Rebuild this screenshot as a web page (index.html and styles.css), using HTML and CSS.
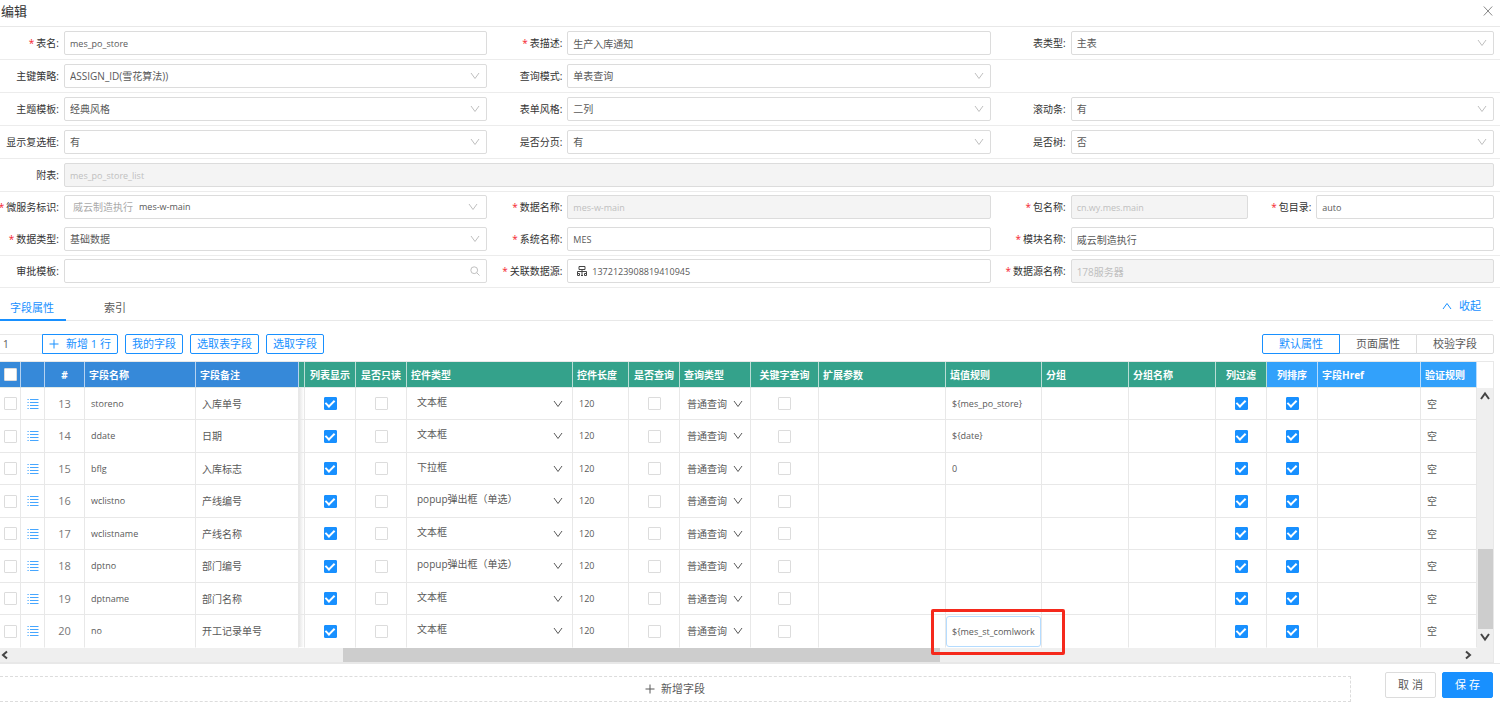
FILE: index.html
```
<!DOCTYPE html>
<html lang="zh-CN">
<head>
    <meta charset="UTF-8">
    <meta name="viewport" content="width=device-width, initial-scale=1.0">
    <title>编辑</title>
    <link rel="stylesheet" href="styles.css">
</head>
<body>
    <!-- shared icons -->
    <svg class="sprite" aria-hidden="true">
        <symbol id="i-down" viewBox="0 0 10 10"><path d="M1 2l4 5.5L9 2" /></symbol>
        <symbol id="i-up" viewBox="0 0 10 10"><path d="M1 8l4-5.5L9 8" /></symbol>
        <symbol id="i-left" viewBox="0 0 10 10"><path d="M7 1.5L3 5l4 3.5" /></symbol>
        <symbol id="i-right" viewBox="0 0 10 10"><path d="M3 1.5L7 5l-4 3.5" /></symbol>
        <symbol id="i-plus" viewBox="0 0 10 10"><path d="M5 .5v9M.5 5h9" /></symbol>
        <symbol id="i-close" viewBox="0 0 10 10"><path d="M.8.5l8.4 9M9.2.5L.8 9.5" /></symbol>
        <symbol id="i-search" viewBox="0 0 10 10"><circle cx="4.2" cy="4.2" r="3.4" /><path d="M6.7 6.7l2.8 2.8" /></symbol>
        <symbol id="i-tree" viewBox="0 0 10 10"><path d="M2 .5h6v3H2zM5 3.5v6M.5 9.5v-4h9v4M.5 9.5h2v-2h-2M9.5 9.5h-2v-2h2M4 9.5h2" /></symbol>
        <symbol id="i-list" viewBox="0 0 12 12"><path d="M3 1.5h8.5M3 4.5h8.5M3 7.5h8.5M3 10.5h8.5M.5 1.5h1.2M.5 4.5h1.2M.5 7.5h1.2M.5 10.5h1.2" /></symbol>
    </svg>

    <header class="modal-header">
        <h1>编辑</h1>
        <button class="close-btn" type="button" aria-label="关闭"><svg class="icon"><use href="#i-close" /></svg></button>
    </header>

    <form class="form">
        <div class="form-row">
            <label for="tableName"><i>*</i>表名:</label>
            <input class="control latin" id="tableName" type="text" value="mes_po_store">
            <label for="tableTxt"><i>*</i>表描述:</label>
            <input class="control" id="tableTxt" type="text" value="生产入库通知">
            <label for="tableType">表类型:</label>
            <div class="control select"><select id="tableType"><option>主表</option></select><svg class="icon"><use href="#i-down" /></svg></div>
        </div>
        <div class="form-row">
            <label for="idType">主键策略:</label>
            <div class="control select"><select id="idType"><option>ASSIGN_ID(雪花算法))</option></select><svg class="icon"><use href="#i-down" /></svg></div>
            <label for="queryMode">查询模式:</label>
            <div class="control select"><select id="queryMode"><option>单表查询</option></select><svg class="icon"><use href="#i-down" /></svg></div>
        </div>
        <div class="form-row">
            <label for="theme">主题模板:</label>
            <div class="control select"><select id="theme"><option>经典风格</option></select><svg class="icon"><use href="#i-down" /></svg></div>
            <label for="formStyle">表单风格:</label>
            <div class="control select"><select id="formStyle"><option>二列</option></select><svg class="icon"><use href="#i-down" /></svg></div>
            <label for="scroll">滚动条:</label>
            <div class="control select"><select id="scroll"><option>有</option></select><svg class="icon"><use href="#i-down" /></svg></div>
        </div>
        <div class="form-row">
            <label for="isCheckbox">显示复选框:</label>
            <div class="control select"><select id="isCheckbox"><option>有</option></select><svg class="icon"><use href="#i-down" /></svg></div>
            <label for="isPage">是否分页:</label>
            <div class="control select"><select id="isPage"><option>有</option></select><svg class="icon"><use href="#i-down" /></svg></div>
            <label for="isTree">是否树:</label>
            <div class="control select"><select id="isTree"><option>否</option></select><svg class="icon"><use href="#i-down" /></svg></div>
        </div>
        <div class="form-row">
            <label for="subTable">附表:</label>
            <input class="control wide latin" id="subTable" type="text" value="mes_po_store_list" disabled>
        </div>
        <div class="form-row compact no-line">
            <label for="service"><i>*</i>微服务标识:</label>
            <div class="control select tagged"><span>威云制造执行</span><select class="latin" id="service"><option>mes-w-main</option></select><svg class="icon"><use href="#i-down" /></svg></div>
            <label for="dataName"><i>*</i>数据名称:</label>
            <input class="control latin" id="dataName" type="text" value="mes-w-main" disabled>
            <label for="packageName"><i>*</i>包名称:</label>
            <div class="split">
                <input class="control latin" id="packageName" type="text" value="cn.wy.mes.main" disabled>
                <label for="packageDir"><i>*</i>包目录:</label>
                <input class="control latin" id="packageDir" type="text" value="auto">
            </div>
        </div>
        <div class="form-row compact">
            <label for="dataType"><i>*</i>数据类型:</label>
            <div class="control select"><select id="dataType"><option>基础数据</option></select><svg class="icon"><use href="#i-down" /></svg></div>
            <label for="systemName"><i>*</i>系统名称:</label>
            <input class="control latin" id="systemName" type="text" value="MES">
            <label for="moduleName"><i>*</i>模块名称:</label>
            <input class="control" id="moduleName" type="text" value="威云制造执行">
        </div>
        <div class="form-row compact">
            <label for="approve">审批模板:</label>
            <div class="control select"><input id="approve" type="text"><svg class="icon"><use href="#i-search" /></svg></div>
            <label for="dataSource"><i>*</i>关联数据源:</label>
            <div class="control select source"><svg class="icon"><use href="#i-tree" /></svg><input class="latin" id="dataSource" type="text" value="1372123908819410945"></div>
            <label for="sourceName"><i>*</i>数据源名称:</label>
            <input class="control" id="sourceName" type="text" value="178服务器" disabled>
        </div>
    </form>

    <nav class="tabs">
        <a class="tab active" href="#fields">字段属性</a>
        <a class="tab" href="#index">索引</a>
        <a class="collapse" href="#collapse"><svg class="icon"><use href="#i-up" /></svg>收起</a>
    </nav>

    <div class="toolbar">
        <div class="add-group">
            <input type="text" value="1" aria-label="新增行数">
            <button class="btn" type="button"><svg class="icon"><use href="#i-plus" /></svg>新增 1 行</button>
        </div>
        <button class="btn" type="button">我的字段</button>
        <button class="btn" type="button">选取表字段</button>
        <button class="btn" type="button">选取字段</button>
        <div class="mode-group">
            <button class="active" type="button">默认属性</button>
            <button type="button">页面属性</button>
            <button type="button">校验字段</button>
        </div>
    </div>

    <section class="grid" id="fields">
        <div class="grid-main">
            <table>
                <colgroup>
                    <col class="w-check"><col class="w-menu"><col class="w-num"><col class="w-name"><col class="w-href">
                    <col class="w-shadow"><col class="w-flag"><col class="w-flag"><col class="w-type"><col class="w-len">
                    <col class="w-flag"><col class="w-query"><col class="w-key"><col><col class="w-rule">
                    <col class="w-group"><col class="w-group"><col class="w-flag"><col class="w-flag"><col class="w-href"><col class="w-len">
                </colgroup>
                <thead>
                    <tr>
                        <th class="fixed center"><input class="check" type="checkbox" aria-label="全选"></th>
                        <th class="fixed"></th>
                        <th class="fixed center">#</th>
                        <th class="fixed">字段名称</th>
                        <th class="fixed">字段备注</th>
                        <th></th>
                        <th class="center">列表显示</th>
                        <th class="center">是否只读</th>
                        <th>控件类型</th>
                        <th>控件长度</th>
                        <th class="center">是否查询</th>
                        <th>查询类型</th>
                        <th class="center">关键字查询</th>
                        <th>扩展参数</th>
                        <th>填值规则</th>
                        <th>分组</th>
                        <th>分组名称</th>
                        <th class="center">列过滤</th>
                        <th class="extra center">列排序</th>
                        <th class="extra">字段Href</th>
                        <th class="extra">验证规则</th>
                    </tr>
                </thead>
                <tbody id="rows"></tbody>
            </table>
            <div class="hscroll">
                <svg class="icon"><use href="#i-left" /></svg>
                <div class="htrack"><div class="hthumb"></div></div>
                <svg class="icon"><use href="#i-right" /></svg>
            </div>
        </div>
        <div class="vscroll">
            <svg class="icon"><use href="#i-up" /></svg>
            <div class="vthumb"></div>
            <svg class="icon"><use href="#i-down" /></svg>
        </div>
    </section>

    <footer class="modal-footer">
        <button class="add-field" type="button"><svg class="icon"><use href="#i-plus" /></svg>新增字段</button>
        <div class="actions">
            <button type="button">取 消</button>
            <button class="primary" type="button">保 存</button>
        </div>
    </footer>

    <script src="script.js"></script>
</body>
</html>
```
FILE: styles.css
```
* {
    box-sizing: border-box;
}

body {
    margin: 0;
    background: #fff;
    color: #595959;
    font-family: "Open Sans", "Noto Sans CJK SC", sans-serif;
    font-size: 10px;
    line-height: 16px;
    overflow-x: hidden;
}

button,
input,
select {
    margin: 0;
    font: inherit;
    color: inherit;
}

button {
    padding: 0;
    background: #fff;
    cursor: pointer;
    white-space: nowrap;
}

a {
    color: inherit;
    text-decoration: none;
}

.latin {
    font-size: 9px;
}

.sprite {
    display: none;
}

.icon {
    width: 10px;
    height: 10px;
    flex: none;
    fill: none;
    stroke: currentColor;
    stroke-width: 1;
}

/* header */
.modal-header {
    display: flex;
    align-items: center;
    justify-content: space-between;
    height: 27px;
    padding: 0 7px 4px 1px;
    border-bottom: 1px solid #e8e8e8;
}

.modal-header h1 {
    margin: 0;
    color: #333;
    font-size: 13px;
    font-weight: 400;
}

.close-btn {
    display: flex;
    border: 0;
    color: #888;
}

/* form */
.form-row {
    display: grid;
    grid-template-columns: 64px 1fr 80px 1fr 80px 1fr;
    height: 33px;
    padding: 4px 6px 0 0;
    border-bottom: 1px solid #ececec;
}

.form-row.compact {
    height: 32px;
    padding-top: 3px;
}

.form-row.no-line {
    border-bottom-color: transparent;
}

.form label {
    display: flex;
    align-items: center;
    justify-content: flex-end;
    height: 24px;
    padding-right: 5px;
    color: #333;
    white-space: nowrap;
}

.form label i {
    margin-right: 2px;
    color: #f5222d;
    font-style: normal;
}

.control {
    width: 100%;
    min-width: 0;
    height: 24px;
    padding: 0 5px;
    border: 1px solid #dcdcdc;
    border-radius: 2px;
    background: #fff;
}

.control:disabled {
    background: #f4f4f4;
    color: #bfbfbf;
}

.wide {
    grid-column: 2 / -1;
}

.select {
    display: flex;
    align-items: center;
    padding-right: 6px;
}

.select select,
.select input {
    flex: 1;
    min-width: 0;
    height: 100%;
    padding: 0;
    border: 0;
    outline: 0;
    appearance: none;
    background: transparent;
}

.select .icon {
    color: #bfbfbf;
}

.tagged {
    gap: 6px;
    padding: 0 8px;
}

.tagged span {
    color: #aaa;
}

.source {
    gap: 5px;
    padding-left: 9px;
}

.source .icon {
    color: #444;
}

.split {
    display: grid;
    grid-template-columns: 1fr 68px 1fr;
}

/* tabs */
.tabs {
    display: flex;
    height: 33px;
    margin-right: 7px;
    border-bottom: 1px solid #e8e8e8;
    font-size: 11px;
    line-height: 39px;
}

.tab {
    height: 33px;
    margin-right: 28px;
    padding: 0 12px 0 10px;
}

.tab.active {
    border-bottom: 2px solid #1890ff;
    color: #1890ff;
}

.collapse {
    display: flex;
    align-items: center;
    gap: 7px;
    height: 35px;
    margin-left: auto;
    padding-right: 12px;
    color: #1890ff;
}

/* toolbar */
.toolbar {
    display: flex;
    gap: 7px;
    padding: 13px 6px 7px 0;
    font-size: 11px;
}

.btn {
    display: flex;
    align-items: center;
    height: 20px;
    padding: 0 6px;
    border: 1px solid #1890ff;
    border-radius: 2px;
    color: #1890ff;
}

.add-group {
    display: flex;
}

.add-group input {
    width: 42px;
    height: 20px;
    padding: 0 3px;
    border: 1px solid #e8e8e8;
    border-width: 1px 0;
    font-size: 10px;
}

.add-group .btn {
    gap: 7px;
    border-radius: 0 2px 2px 0;
}

.mode-group {
    display: flex;
    margin-left: auto;
}

.mode-group button {
    width: 78px;
    height: 20px;
    margin-left: -1px;
    border: 1px solid #dcdcdc;
}

.mode-group .active {
    z-index: 1;
    border-color: #1890ff;
    border-radius: 2px 0 0 2px;
    color: #1890ff;
}

.mode-group button:last-child {
    border-radius: 0 2px 2px 0;
}

/* table */
.grid {
    display: flex;
    margin-right: 6px;
    border: 1px solid #e8e8e8;
    border-left: 0;
}

.grid-main {
    flex: 1;
    min-width: 0;
}

table {
    width: 100%;
    table-layout: fixed;
    border-collapse: separate;
    border-spacing: 0;
}

.w-check { width: 21px; }
.w-menu { width: 24px; }
.w-num { width: 40px; }
.w-name { width: 111px; }
.w-href { width: 103px; }
.w-shadow { width: 6px; }
.w-flag { width: 51px; }
.w-type { width: 166px; }
.w-len { width: 56px; }
.w-query { width: 71px; }
.w-key { width: 68px; }
.w-rule { width: 96px; }
.w-group { width: 87px; }

th,
td {
    padding: 0;
    white-space: nowrap;
    text-align: left;
}

th {
    height: 26px;
    padding-left: 4px;
    border-right: 1px solid #b9ddd5;
    border-bottom: 1px solid #e0eae8;
    background: #34a28b;
    color: #fff;
    font-weight: 700;
}

th.fixed {
    border-right-color: #b5d2f0;
    background: #3689d9;
}

th.extra {
    border-right-color: #b5dcff;
    background: #32a1fb;
}

td {
    height: 32px;
    padding-left: 6px;
    border-right: 1px solid #e8e8e8;
    border-bottom: 1px solid #e8e8e8;
}

tr:nth-child(even) td {
    height: 33px;
}

tr:last-child td {
    border-bottom-color: #fff;
}

th.center,
td.center {
    padding-left: 0;
    text-align: center;
}

td.num {
    color: #777;
    font-size: 11px;
}

td.menu {
    color: #46a6ff;
}

td.menu .icon {
    display: block;
    width: 12px;
    height: 12px;
    margin: 0 auto;
}

td.shadow {
    padding: 0;
    background: linear-gradient(to right, #e6e6e6, #fff);
}

.check {
    display: grid;
    place-items: center;
    width: 13px;
    height: 13px;
    margin: 0 auto;
    border: 1px solid #dcdcdc;
    border-radius: 1px;
    appearance: none;
    background: #fff;
}

.check:checked {
    border-color: #1890ff;
    background: #1890ff;
}

.check:checked::after {
    content: "";
    width: 4px;
    height: 7px;
    margin-bottom: 3px;
    border: solid #fff;
    border-width: 0 2px 2px 0;
    transform: rotate(45deg);
}

.cell-select {
    display: flex;
    align-items: center;
    padding: 0 9px 0 4px;
}

.cell-select.raised select {
    padding-bottom: 4px;
}

.cell-select select {
    flex: 1;
    min-width: 0;
    height: 24px;
    padding: 0;
    border: 0;
    appearance: none;
    background: transparent;
}

.cell-select.short {
    padding: 0 7px 0 1px;
}

.editing {
    position: relative;
}

td.editing {
    padding: 0;
}

.editing input {
    display: block;
    width: 100%;
    height: 31px;
    padding: 0 5px;
    border: 1px solid #b5dcff;
    border-radius: 3px;
    outline: 0;
}

/* marker drawn over the edited cell */
.marker {
    position: absolute;
    inset: -6px -24px -8px -15px;
    border: 3px solid #f5291c;
    border-radius: 2px;
    pointer-events: none;
    z-index: 2;
}

/* scrollbars */
.hscroll {
    display: flex;
    align-items: center;
    height: 14px;
    padding: 0 4px 0 0;
    background: #efefef;
}

.hscroll .icon,
.vscroll .icon {
    color: #444;
    stroke-width: 2;
}

.htrack {
    display: grid;
    flex: 1;
    grid-template-columns: 333fr 597fr 523fr;
    height: 100%;
}

.hthumb {
    grid-column: 2;
    background: #cdcdcd;
}

.vscroll {
    display: flex;
    flex-direction: column;
    align-items: center;
    width: 16px;
    padding: 3px 0 20px;
    border-top: 26px solid #fff;
    background: #efefef;
}

.vthumb {
    width: 15px;
    height: 80px;
    margin: auto 0 3px;
    background: #cdcdcd;
}

/* footer */
.modal-footer {
    display: flex;
    align-items: flex-start;
    gap: 34px;
    padding: 8px 7px 0 0;
    border-top: 1px solid #e8e8e8;
}

.add-field {
    display: flex;
    flex: 1;
    align-items: center;
    justify-content: center;
    gap: 6px;
    height: 26px;
    margin-top: 4px;
    border: 1px dashed #dcdcdc;
    border-left: 0;
    font-size: 11px;
}

.actions {
    display: flex;
    gap: 6px;
}

.actions button {
    width: 51px;
    height: 26px;
    border: 1px solid #dcdcdc;
    border-radius: 2px;
    font-size: 11px;
}

.actions .primary {
    border-color: #1890ff;
    background: #1890ff;
    color: #fff;
}
```
FILE: script.js
```
const fields = [
    { no: 13, name: 'storeno', label: '入库单号', type: '文本框', rule: '${mes_po_store}' },
    { no: 14, name: 'ddate', label: '日期', type: '文本框', rule: '${date}' },
    { no: 15, name: 'bflg', label: '入库标志', type: '下拉框', rule: '0' },
    { no: 16, name: 'wclistno', label: '产线编号', type: 'popup弹出框（单选）', rule: '' },
    { no: 17, name: 'wclistname', label: '产线名称', type: '文本框', rule: '' },
    { no: 18, name: 'dptno', label: '部门编号', type: 'popup弹出框（单选）', rule: '' },
    { no: 19, name: 'dptname', label: '部门名称', type: '文本框', rule: '' },
    { no: 20, name: 'no', label: '开工记录单号', type: '文本框', rule: '${mes_st_comlwork', editing: true }
];

function check(label, on) {
    return `<input class="check" type="checkbox" aria-label="${label}"${on ? ' checked' : ''}>`;
}

function select(label, value, cls) {
    return `<div class="cell-select ${cls}"><select aria-label="${label}"><option>${value}</option></select>` +
        '<svg class="icon"><use href="#i-down" /></svg></div>';
}

document.getElementById('rows').innerHTML = fields.map(f => `
    <tr>
        <td class="center">${check('选择', false)}</td>
        <td class="center menu"><svg class="icon"><use href="#i-list" /></svg></td>
        <td class="center num">${f.no}</td>
        <td class="latin">${f.name}</td>
        <td>${f.label}</td>
        <td class="shadow"></td>
        <td class="center">${check('列表显示', true)}</td>
        <td class="center">${check('是否只读', false)}</td>
        <td>${select('控件类型', f.type, 'raised')}</td>
        <td class="latin">120</td>
        <td class="center">${check('是否查询', false)}</td>
        <td>${select('查询类型', '普通查询', 'short')}</td>
        <td class="center">${check('关键字查询', false)}</td>
        <td></td>
        ${f.editing
            ? `<td class="editing latin"><input type="text" aria-label="填值规则" value="${f.rule}"><span class="marker"></span></td>`
            : `<td class="latin">${f.rule}</td>`}
        <td></td>
        <td></td>
        <td class="center">${check('列过滤', true)}</td>
        <td class="center">${check('列排序', true)}</td>
        <td></td>
        <td>空</td>
    </tr>`).join('');
```
